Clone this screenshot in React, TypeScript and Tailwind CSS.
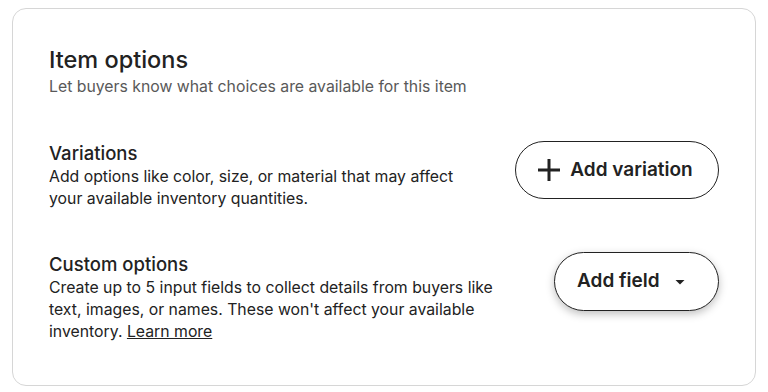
import React from "react";

function PlusIcon() {
  return (
    <svg width="24" height="24" viewBox="0 0 24 24" className="shrink-0">
      <path d="M12 1v22M1 12h22" stroke="#222" strokeWidth="3" />
    </svg>
  );
}

function CaretIcon() {
  return (
    <svg width="10" height="10" viewBox="0 0 10 10" className="shrink-0">
      <path d="M0.5 3h9l-4.5 4.5z" fill="#222" />
    </svg>
  );
}

export default function App() {
  return (
    <div
      className="h-[392px] w-[768px] bg-white px-[12px] pt-[8px] text-[#222]"
      style={{ fontFamily: "Inter, 'Noto Sans', sans-serif" }}
    >
      <section className="h-[378px] w-[744px] rounded-[14px] border border-[#d6d6d6] px-[36px] pt-[35px]">
        <h2 className="text-[23.5px] font-medium leading-[32px]">Item options</h2>
        <p className="text-[15.8px] leading-[22px] text-[#595959]">
          Let buyers know what choices are available for this item
        </p>

        <div className="mt-[43px] flex items-start justify-between">
          <div className="w-[432px]">
            <h3 className="text-[18.5px] font-medium leading-[25px]">Variations</h3>
            <p className="text-[15.8px] leading-[22px] text-[#222]">
              Add options like color, size, or material that may affect your available inventory
              quantities.
            </p>
          </div>
          <button className="flex h-[58px] w-[204px] items-center justify-center gap-[9px] rounded-full border border-[#222] bg-white pr-[4px] text-[19px] font-semibold">
            <PlusIcon />
            Add variation
          </button>
        </div>

        <div className="mt-[42px] flex items-start justify-between">
          <div className="w-[468px]">
            <h3 className="text-[18.5px] font-medium leading-[25px]">Custom options</h3>
            <p className="text-[15.8px] leading-[22px] text-[#222]">
              Create up to 5 input fields to collect details from buyers like text, images, or
              names. These won't affect your available inventory.{" "}
              <a href="#" className="underline">
                Learn more
              </a>
            </p>
          </div>
          <button className="flex h-[59px] w-[165px] items-center justify-start gap-[15px] rounded-full border border-[#222] bg-white pl-[22px] text-[19px] font-semibold shadow-[0_3px_8px_rgba(0,0,0,0.25)]">
            Add field
            <CaretIcon />
          </button>
        </div>
      </section>
    </div>
  );
}
